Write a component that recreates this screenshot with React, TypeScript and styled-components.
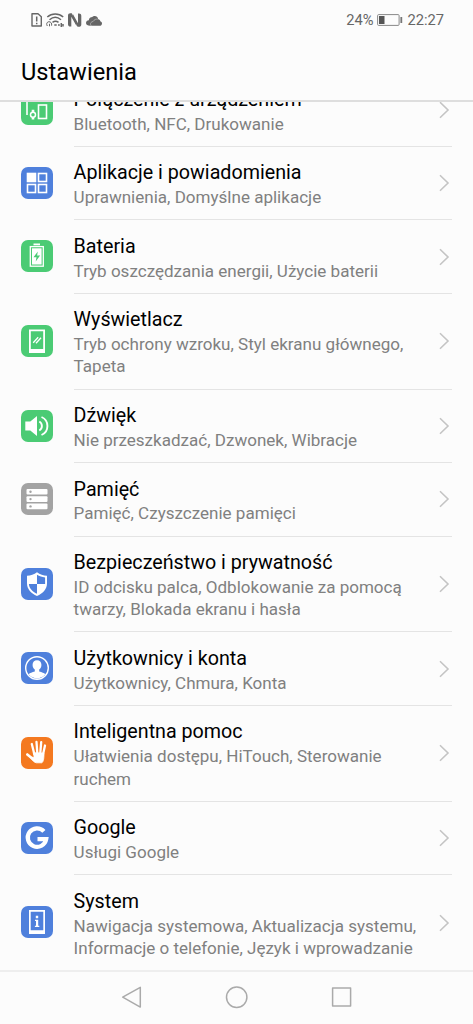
import React from 'react';
import styled, { createGlobalStyle } from 'styled-components';

const GlobalStyle = createGlobalStyle`
  * { box-sizing: border-box; }
  body { margin: 0; background: #fcfcfc; font-family: Roboto, "Noto Sans", sans-serif; }
`;

const Screen = styled.div`
  width: 473px;
  height: 1024px;
  display: flex;
  flex-direction: column;
  overflow: hidden;
  background: #fcfcfc;
`;

const StatusBar = styled.div`
  height: 40px;
  flex: none;
  display: flex;
  justify-content: space-between;
  padding: 0 29px 0 31px;
  color: #666;
`;

const StatusGroup = styled.div<{ $gap: number }>`
  display: flex;
  align-items: center;
  gap: ${(p) => p.$gap}px;
  font-size: 14.7px;
  line-height: 40px;
`;

const Header = styled.header`
  height: 62px;
  flex: none;
  padding: 16px 21px 0;
  border-bottom: 2px solid #dedede;
  font-size: 23.65px;
  line-height: 32px;
  color: #000;
`;

const List = styled.main`
  flex: 1;
  min-height: 0;
  overflow: hidden;
`;

const Rows = styled.div`
  margin-top: -28.7px;
`;

const Row = styled.div<{ $tall: boolean }>`
  height: ${(p) => (p.$tall ? 95.8 : 73.5)}px;
  display: flex;
  align-items: center;
  padding-left: 21px;
`;

const Tile = styled.div<{ $color: string }>`
  width: 32px;
  height: 32px;
  flex: none;
  margin: 0 20.6px 1.6px 0;
  border-radius: 7px;
  background: ${(p) => p.$color};
  svg { display: block; }
`;

const Content = styled.div<{ $last: boolean }>`
  width: 378.4px;
  height: 100%;
  display: flex;
  align-items: center;
  justify-content: space-between;
  padding-right: 2.4px;
  border-bottom: 1px solid ${(p) => (p.$last ? 'transparent' : '#e4e4e4')};
`;

const Texts = styled.div`
  align-self: flex-start;
  padding-top: 13.5px;
  white-space: nowrap;
`;

const Title = styled.div`
  font-size: 19.7px;
  line-height: 25px;
  color: #000;
`;

const Summary = styled.div`
  margin-top: 0.8px;
  font-size: 17.05px;
  line-height: 22.3px;
  color: #808080;
  white-space: pre-line;
`;

const NavBar = styled.nav`
  height: 54px;
  flex: none;
  display: flex;
  justify-content: center;
  align-items: center;
  gap: 81px;
  padding-bottom: 2px;
  border-top: 2px solid #eee;
`;

const line = { fill: 'none', stroke: '#fff', strokeWidth: 1.6 };

const icons: Record<string, React.ReactNode> = {
  devices: (
    <g {...line}>
      <path d="M6 22V7H25" />
      <rect x="17.500" y="12" width="8" height="13.500" />
      <path d="M12 16.800v2.400M12 24.200v2.300" strokeWidth="2.600" />
      <circle cx="12" cy="21.700" r="2.500" strokeWidth="1.500" />
    </g>
  ),
  apps: (
    <g {...line}>
      <rect x="6.500" y="6.500" width="8" height="8" fill="#fff" />
      <rect x="17.500" y="6.500" width="8" height="8" />
      <rect x="6.500" y="17.500" width="8" height="8" />
      <rect x="17.500" y="17.500" width="8" height="8" />
    </g>
  ),
  battery: (
    <g>
      <rect x="12.500" y="3.500" width="6.500" height="1.800" fill="#fff" />
      <rect x="9.300" y="6.600" width="13" height="19.600" {...line} strokeWidth={1.3} />
      <rect x="11" y="8.300" width="9.600" height="16.200" fill="#fff" />
      <path d="M16.800 11.500l-4.300 5.700h3l-.8 4.300 4.400-5.900h-3z" fill="#4bcb74" />
    </g>
  ),
  display: (
    <g>
      <path fillRule="evenodd" fill="#fff" d="M8 4.500h16v23.500H8zM9.800 6.300v17.700h12.400V6.300z" />
      <path d="M12.200 17.800l5-5.500M15 18.300l5-5.500" {...line} strokeWidth={1.3} />
    </g>
  ),
  sound: (
    <g>
      <path d="M4.300 11.500h5L16 6v20l-6.700-5.500h-5z" fill="#fff" />
      <path d="M18.300 11.500a5.200 5.200 0 0 1 0 9M20.500 7a9.800 9.800 0 0 1 0 18" {...line} strokeWidth={1.9} />
    </g>
  ),
  storage: (
    <g>
      {[6, 13.3, 20.6].map((y) => (
        <g key={y}>
          <rect x="5.500" y={y} width="21" height="5.600" rx="1" fill="#fff" />
          <circle cx="9.500" cy={y + 2.8} r="1.200" fill="#a3a3a3" />
        </g>
      ))}
    </g>
  ),
  shield: (
    <g>
      <path d="M16 4.300c3 2.500 6.300 3.300 10 3.400v7.500c0 6-4.300 10.300-10 12.700C10.300 25.500 6 21.200 6 15.200V7.700c3.700-.1 7-.9 10-3.400z" fill="#fff" />
      <path d="M16 6.800v9.200h8.100V9.400c-3-.2-5.600-1-8.100-2.600zM16 16H7.900c.3 4.600 3.700 7.700 8.100 9.800z" fill="#4f80dc" />
    </g>
  ),
  user: (
    <g>
      <circle cx="16" cy="16" r="11.300" {...line} strokeWidth={1.4} />
      <path d="M16 8.300c-2.900 0-4.600 2-4.400 4.900.1 2 .9 3.500 2.200 4.400v1.800c-2.600.8-5 1.300-6.100 2.800a10.300 10.300 0 0 0 16.600 0c-1.100-1.500-3.500-2-6.100-2.800v-1.800c1.300-.9 2.100-2.400 2.200-4.400.2-2.900-1.500-4.900-4.400-4.900z" fill="#fff" />
    </g>
  ),
  hand: (
    <g stroke="#fff" strokeLinecap="round" fill="none">
      <path d="M10.800 7L13.300 17M15.500 5L16.300 16M20.200 5.200L19.300 16M24 8.500L21.900 18" strokeWidth="2.300" />
      <path d="M6.300 17.500l6 4.800" strokeWidth="2.600" />
      <path d="M12.600 15.800l10.200.2c.5 4-.3 9.200-2 9.800h-5.600c-2-.3-4.200-2.900-6.200-5.400l4-.2z" fill="#fff" strokeWidth="0.800" strokeLinejoin="round" />
    </g>
  ),
  google: (
    <path d="M22.900 9.300A9.300 9.300 0 1 0 25.200 17.200H16.500" fill="none" stroke="#fff" strokeWidth="4.200" />
  ),
  system: (
    <g fill="#fff">
      <path fillRule="evenodd" d="M8 4h16v24H8zM9.700 5.700v18.500h12.600V5.700z" />
      <path d="M14.800 9.800h2.400v2.400h-2.400zM14 13.800h3.200v5.900h1.100v1.300h-4.400v-1.300h1.100v-4.600H14z" />
    </g>
  ),
};

const GREEN = '#4bcb74';
const BLUE = '#4f80dc';

const items = [
  { icon: 'devices', color: GREEN, title: 'Połączenie z urządzeniem', text: 'Bluetooth, NFC, Drukowanie' },
  { icon: 'apps', color: BLUE, title: 'Aplikacje i powiadomienia', text: 'Uprawnienia, Domyślne aplikacje' },
  { icon: 'battery', color: GREEN, title: 'Bateria', text: 'Tryb oszczędzania energii, Użycie baterii' },
  { icon: 'display', color: GREEN, title: 'Wyświetlacz', text: 'Tryb ochrony wzroku, Styl ekranu głównego,\nTapeta' },
  { icon: 'sound', color: GREEN, title: 'Dźwięk', text: 'Nie przeszkadzać, Dzwonek, Wibracje' },
  { icon: 'storage', color: '#a3a3a3', title: 'Pamięć', text: 'Pamięć, Czyszczenie pamięci' },
  { icon: 'shield', color: BLUE, title: 'Bezpieczeństwo i prywatność', text: 'ID odcisku palca, Odblokowanie za pomocą\ntwarzy, Blokada ekranu i hasła' },
  { icon: 'user', color: BLUE, title: 'Użytkownicy i konta', text: 'Użytkownicy, Chmura, Konta' },
  { icon: 'hand', color: '#f47920', title: 'Inteligentna pomoc', text: 'Ułatwienia dostępu, HiTouch, Sterowanie\nruchem' },
  { icon: 'google', color: BLUE, title: 'Google', text: 'Usługi Google' },
  { icon: 'system', color: BLUE, title: 'System', text: 'Nawigacja systemowa, Aktualizacja systemu,\nInformacje o telefonie, Język i wprowadzanie' },
];

const StatusIcons = () => (
  <svg width="72" height="18" viewBox="0 0 72 18" fill="none" stroke="#666">
    <path d="M1 2.800h6l3.300 3v9.200H1z" strokeWidth="1.400" strokeLinejoin="round" />
    <path d="M5.700 5.500v5M5.700 11.700v1.600" strokeWidth="1.500" />
    <path d="M16.300 6c4.500-4 11.400-4 15.900 0M18.500 8.800c3.500-3 8-3 11.500 0M21.500 11.300c2-1.500 4-1.500 6 0" strokeWidth="1.500" />
    <path d="M16.300 15c-1.200-2-.5-4 1.500-4.300 2 0 3.300 1.500 2.800 4M18.500 15.300v-2.500" strokeWidth="1" />
    <path d="M23.300 14h2.400M27 14h1.800M30.300 12v4M32 13v2.500" strokeWidth="1.500" />
    <path d="M40.800 2.300h-1.500c-1.300 0-2.300.8-2.300 2.200v8.800c0 1.500 1 2.300 2.300 2.300h1V5.800l5.200 9.300v-3.900z" fill="#666" stroke="none" />
    <path d="M46.500 15.800H48c1.300 0 2.300-.8 2.300-2.300V4.700c0-1.400-1-2.300-2.300-2.300h-1v9.900l-5-9v3.900z" fill="#666" stroke="none" />
    <path d="M59 14.800c-2.200 0-4-1-4-2.700 0-1.700 1.200-2.700 2.800-2.800.2-2 1.800-3.200 3.600-3.200 1-1.600 5.300-1.700 5.800 2.100 1.300.2 2 .9 2.100 2 2.600.8 2.200 4.600-.6 4.600z" fill="#666" stroke="none" />
    <path d="M60.200 14.800c-1.500-2-.4-4 1.900-4.300 1-2 3-2.700 4.600-2.300" stroke="#fcfcfc" strokeWidth="0.400" />
  </svg>
);

const Battery = () => (
  <svg width="26" height="12" viewBox="0 0 26 12" fill="none">
    <rect x="0.600" y="0.600" width="21.500" height="10.800" rx="1" stroke="#888" strokeWidth="1" />
    <rect x="2" y="2" width="5.500" height="8" fill="#555" />
    <path d="M24.300 3v6" stroke="#777" strokeWidth="1.800" />
  </svg>
);

const Chevron = () => (
  <svg width="12" height="18" viewBox="0 0 12 18" fill="none">
    <path d="M2 1.200L10 9l-8 7.800" stroke="#c4c4c4" strokeWidth="1.600" />
  </svg>
);

export default function App() {
  return (
    <>
      <GlobalStyle />
      <Screen>
        <StatusBar>
          <StatusGroup $gap={0}><StatusIcons /></StatusGroup>
          <StatusGroup $gap={4}>
            <span>24%</span>
            <Battery />
            <span>22:27</span>
          </StatusGroup>
        </StatusBar>
        <Header>Ustawienia</Header>
        <List>
          <Rows>
            {items.map((item, i) => (
              <Row key={item.title} $tall={item.text.includes('\n')}>
                <Tile $color={item.color}>
                  <svg width="32" height="32" viewBox="0 0 32 32">{icons[item.icon]}</svg>
                </Tile>
                <Content $last={i === items.length - 1}>
                  <Texts>
                    <Title>{item.title}</Title>
                    <Summary>{item.text}</Summary>
                  </Texts>
                  <Chevron />
                </Content>
              </Row>
            ))}
          </Rows>
        </List>
        <NavBar>
          <svg width="24" height="24" viewBox="0 0 24 24" fill="none" stroke="#aaa" strokeWidth="1.500" strokeLinejoin="round">
            <path d="M2.700 12.200L20.300 2.300v19.800z" />
          </svg>
          <svg width="24" height="24" viewBox="0 0 24 24" fill="none" stroke="#aaa" strokeWidth="1.500">
            <circle cx="11.700" cy="12.200" r="10.200" />
          </svg>
          <svg width="24" height="24" viewBox="0 0 24 24" fill="none" stroke="#aaa" strokeWidth="1.500" strokeLinejoin="round">
            <rect x="2.600" y="3" width="18" height="18" />
          </svg>
        </NavBar>
      </Screen>
    </>
  );
}
